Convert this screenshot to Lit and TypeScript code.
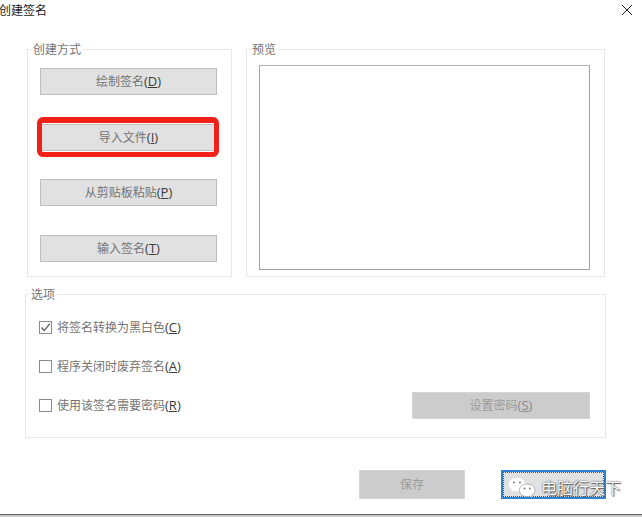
import { LitElement, html, css } from "lit";
import { customElement } from "lit/decorators.js";

@customElement("app-root")
export class AppRoot extends LitElement {
  static styles = css`
    :host { display: block; width: 642px; height: 517px; overflow: hidden; background: #fff; }
    * { box-sizing: border-box; }
    .dialog {
      position: relative; width: 642px; height: 517px; display: flex; flex-direction: column;
      font-family: "Open Sans", "Noto Sans CJK SC", sans-serif; font-size: 12px; color: #747474; background: #fff;
    }
    .title { height: 20px; display: flex; align-items: center; justify-content: space-between; padding-right: 10px; font-size: 12px; color: #1a1a1a; margin-left: -1px; }
    .title svg { display: block; }
    .top { display: flex; gap: 14px; margin: 29px 0 0 27px; }
    .group { position: relative; border: 1px solid #e8e8e8; }
    .legend { position: absolute; top: -9px; left: 3px; background: #fff; padding: 0 2px; line-height: 17px; color: #747474; }
    .methods { width: 205px; height: 228px; padding: 18px 14px 14px 12px; display: flex; flex-direction: column; justify-content: space-between; }
    .preview { width: 359px; height: 228px; padding: 15px 14px 6px 12px; }
    .canvas { width: 331px; height: 205px; border: 1px solid #a3a3a3; border-top-color: #b5b5b5; background: #fff; }
    .btn {
      position: relative; display: flex; align-items: center; justify-content: center; height: 27px; padding-bottom: 1px;
      background: #e1e1e1; border: 1px solid #bfbfbf; color: #747474; white-space: nowrap;
    }
    .key { color: #3c3c3c; text-decoration: underline; text-underline-offset: 1px; }
    .paren { color: #3c3c3c; font-size: 13px; }
    .ring { position: absolute; top: -8px; left: -4px; right: -3px; bottom: -7px; border: 5px solid #f3201a; border-top-width: 6px; border-radius: 6px; }
    .options { width: 581px; height: 144px; margin: 17px 0 0 25px; padding: 19px 15px 0 13px; display: flex; flex-direction: column; gap: 12px; }
    .row { display: flex; align-items: center; height: 27px; gap: 5px; }
    .row > span:not(.box) { padding-bottom: 2px; }
    .box { width: 13px; height: 13px; border: 1px solid #8a8a8a; background: #fff; display: flex; }
    .box svg { display: block; }
    .disabled { background: #cccccc; border-color: #d6d6d6; color: #9c9c9c; }
    .disabled .paren, .disabled .key { color: #8a8a8a; }
    .row .btn { width: 178px; margin-left: auto; }
    .footer { display: flex; justify-content: flex-end; gap: 36px; margin-top: 32px; padding-right: 36px; }
    .footer .btn { height: 29px; width: 106px; }
    .footer .next { width: 105px; border: 2px solid #2b82d4; outline: 1px dotted #555; outline-offset: -3px; background: #e1e1e1; }
    .strip { margin-top: auto; height: 3px; background: #c9c9c9; border-top: 1px solid #5f5f5f; }
    .mark { position: absolute; left: 508px; top: 477px; display: flex; align-items: center; gap: 5px; font-size: 16px; line-height: 22px; color: #f8f8f8; text-shadow: 0 0 1.5px #333, 1px 1px 1px #666; white-space: nowrap; }
    .mark svg { display: block; }
  `;

  private label(text: string, key: string) {
    return html`${text}<span class="paren">(<span class="key">${key}</span>)</span>`;
  }

  render() {
    return html`
      <div class="dialog">
        <div class="title">
          <span>创建签名</span>
          <svg width="10" height="10" viewBox="0 0 10 10"><path d="M0 0l10 10M10 0L0 10" stroke="#222" stroke-width="1" fill="none"/></svg>
        </div>
        <div class="top">
          <div class="group methods">
            <span class="legend">创建方式</span>
            <div class="btn">${this.label("绘制签名", "D")}</div>
            <div class="btn">${this.label("导入文件", "I")}<span class="ring"></span></div>
            <div class="btn">${this.label("从剪贴板粘贴", "P")}</div>
            <div class="btn">${this.label("输入签名", "T")}</div>
          </div>
          <div class="group preview">
            <span class="legend">预览</span>
            <div class="canvas"></div>
          </div>
        </div>
        <div class="group options">
          <span class="legend">选项</span>
          <div class="row">
            <span class="box"><svg width="11" height="11" viewBox="0 0 11 11"><path d="M1.5 5.5l2.8 3L9.8 1.6" stroke="#555" stroke-width="1.2" fill="none"/></svg></span>
            <span>${this.label("将签名转换为黑白色", "C")}</span>
          </div>
          <div class="row">
            <span class="box"></span>
            <span>${this.label("程序关闭时废弃签名", "A")}</span>
          </div>
          <div class="row">
            <span class="box"></span>
            <span>${this.label("使用该签名需要密码", "R")}</span>
            <div class="btn disabled">${this.label("设置密码", "S")}</div>
          </div>
        </div>
        <div class="footer">
          <div class="btn disabled">保存</div>
          <div class="btn next"></div>
        </div>
        <div class="strip"></div>
        <div class="mark">
          <svg width="28" height="22" viewBox="0 0 28 22">
            <path d="M9 .5C4.3.5.5 3.6.5 7.6c0 2.3 1.3 4.2 3.2 5.5L3 15.6l2.9-1.5c1 .3 2 .5 3.1.5 4.7 0 8.5-3.1 8.5-7S13.7.5 9 .5z" fill="#fff" stroke="#ddd" stroke-width=".6"/>
            <path d="M19 7c-4.2 0-7.6 2.8-7.6 6.3s3.4 6.3 7.6 6.3c.9 0 1.8-.1 2.6-.4l2.4 1.3-.6-2.1c1.7-1.2 3.7-3 3.7-5.1C26.9 9.8 23.2 7 19 7z" fill="#fff" stroke="#999" stroke-width=".7"/>
            <circle cx="6" cy="5.5" r="1" fill="#777"/><circle cx="12" cy="5.5" r="1" fill="#777"/>
            <circle cx="16.5" cy="11.5" r=".9" fill="#777"/><circle cx="21.8" cy="11.5" r=".9" fill="#777"/>
          </svg>
          <span>电脑行天下</span>
        </div>
      </div>
    `;
  }
}
